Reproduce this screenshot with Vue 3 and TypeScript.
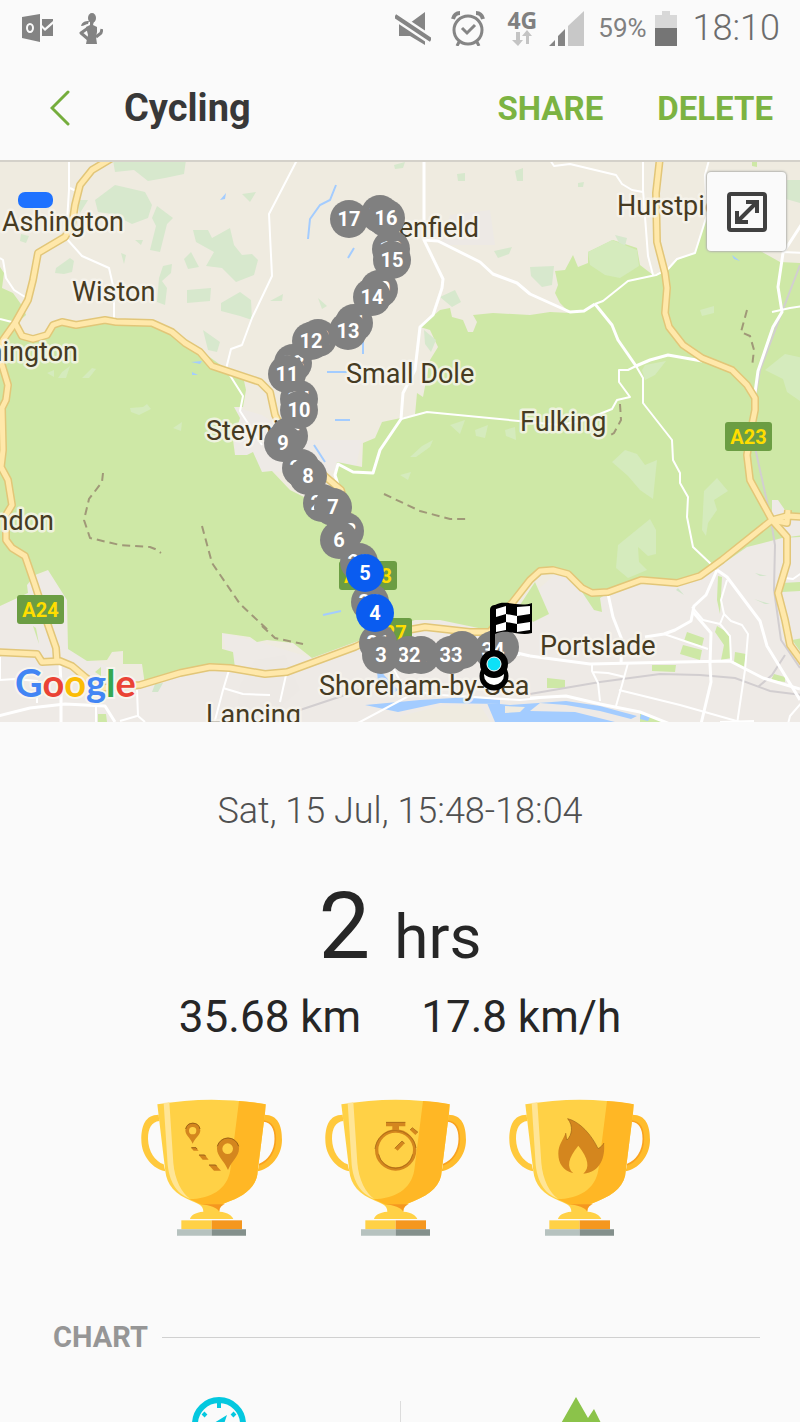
<script setup lang="ts">
interface Place { name: string; x: number; y: number; anchor?: 'start' | 'middle' | 'end' }
interface Marker { label: string; x: number; y: number; active?: boolean }
interface Shield { name: string; x: number; y: number; w: number }

const places: Place[] = [
  { name: 'Ashington', x: 2, y: 231 },
  { name: 'Wiston', x: 72, y: 301 },
  { name: 'Washington', x: 78, y: 361, anchor: 'end' },
  { name: 'Findon', x: 54, y: 530, anchor: 'end' },
  { name: 'Steyni', x: 206, y: 440 },
  { name: 'Henfield', x: 479, y: 237, anchor: 'end' },
  { name: 'Small Dole', x: 346, y: 383 },
  { name: 'Fulking', x: 520, y: 431 },
  { name: 'Hurstpier', x: 617, y: 215 },
  { name: 'Portslade', x: 540, y: 655 },
  { name: 'Shoreham-by-Sea', x: 319, y: 695 },
  { name: 'Lancing', x: 206, y: 724 }
]

const shields: Shield[] = [
  { name: 'A24', x: 17, y: 595, w: 47 },
  { name: 'A23', x: 725, y: 422, w: 47 },
  { name: 'A283', x: 339, y: 561, w: 58 },
  { name: 'A27', x: 365, y: 618, w: 47 }
]

const markers: Marker[] = [
  { label: '1', x: 500, y: 647 },
  { label: '34', x: 493, y: 650 },
  { label: '1', x: 462, y: 650 },
  { label: '33', x: 451, y: 655 },
  { label: '2', x: 421, y: 655 },
  { label: '32', x: 409, y: 655 },
  { label: '31', x: 378, y: 643 },
  { label: '30', x: 370, y: 602 },
  { label: '29', x: 359, y: 562 },
  { label: '28', x: 345, y: 531 },
  { label: '27', x: 322, y: 503 },
  { label: '26', x: 301, y: 468 },
  { label: '25', x: 289, y: 436 },
  { label: '24', x: 299, y: 399 },
  { label: '23', x: 293, y: 363 },
  { label: '22', x: 318, y: 338 },
  { label: '21', x: 354, y: 323 },
  { label: '20', x: 379, y: 289 },
  { label: '19', x: 391, y: 249 },
  { label: '18', x: 380, y: 214 },
  { label: '17', x: 349, y: 219 },
  { label: '16', x: 386, y: 218 },
  { label: '15', x: 392, y: 260 },
  { label: '14', x: 372, y: 297 },
  { label: '13', x: 348, y: 331 },
  { label: '12', x: 311, y: 341 },
  { label: '11', x: 287, y: 374 },
  { label: '10', x: 299, y: 410 },
  { label: '9', x: 283, y: 443 },
  { label: '8', x: 308, y: 476 },
  { label: '7', x: 333, y: 507 },
  { label: '6', x: 339, y: 540 },
  { label: '3', x: 381, y: 655 },
  { label: '5', x: 365, y: 573, active: true },
  { label: '4', x: 375, y: 613, active: true }
]

const mainRoads: string[] = [
  'M112 158L92 170L80 185L75 205L72 225L65 237L38 253L33 280L28 300L15 323L3 340L-3 352L2 365L8 385L6 400L2 408L3 450L1 467L8 480L12 505L6 515L6 540L12 548L25 556L35 585L48 625L56 648L57 663',
  'M15 323L22 336L33 339L47 335L53 325L62 322L76 325L105 320L116 322L152 323L172 332L185 343L200 352L212 366L260 382L270 392L275 415L290 445L327 478L341 490L360 560L376 618L365 640',
  'M-3 652L37 654L42 662L60 661L72 666L85 677L100 688L140 685L180 673L210 667L230 668L265 674L287 672L355 647L380 635L425 627L470 632L490 632L505 612L530 580L540 571L553 570L568 574L582 588L592 593L608 592L641 580L677 583L700 576L722 560L772 520L787 516L803 517',
  'M660 157L656 193L657 242L665 273L667 288L665 313L669 327L683 345L702 358L732 370L747 385L755 398L755 410L751 430L747 455L750 480L772 520L787 537L787 563L778 593L785 620L790 645L803 663',
  'M772 520L787 523L788 510'
]

const wideRoads: string[] = [
  'M424 160V240L443 279L442 288L433 315L420 327L415 370L403 393L401 419L380 450L373 473L353 472L338 464L335 475L339 488',
  'M424 240L438 241L480 262L493 274L517 283L530 294L570 312L584 311L595 304',
  'M595 304L612 325L618 340L636 366L650 360L668 355L702 361',
  'M608 594L613 617L622 640L621 664',
  'M717 570L727 577L760 621L767 646L800 700',
  'M717 570L706 595L694 606L691 621L675 630L664 634L645 637',
  'M693 612L711 633L710 664L711 682L701 724',
  'M530 656L590 664L680 662L730 661L763 678L800 689',
  'M500 649L530 656M60 665L61 683V724',
  'M-2 716L30 708L65 704L105 706L115 722',
  'M530 698L566 696L600 704L640 712L670 724',
  'M803 222L783 253L778 287L782 312L773 327L758 371L754 400'
]

const thinRoads: string[] = [
  'M69 160L69 190L66 238L82 256L109 268L114 290V320',
  'M70 188L78 192M0 258L3 260L6 278L14 290L25 297M0 319L12 322',
  'M302 157L296 162L269 214L272 276L252 318L242 345L231 349L226 369L243 396L240 411L262 445',
  'M550 160L554 166L570 164L616 175L622 184L632 190L643 192M643 160V190L648 256L653 275',
  'M709 160L705 175L707 215L695 253L677 259L668 269L656 275L628 281L603 301L595 304',
  'M401 419L427 412L560 425L585 420L612 409L617 400L630 397L619 382V370L628 370L636 366L643 378V403L672 440L673 460L680 473V483L688 497L687 517L693 547L712 565',
  'M772 312L790 308L803 306M782 252L803 253',
  'M727 580L721 600L724 614L720 624L703 620L692 607M724 614L731 621L742 625L748 634L745 670L737 724',
  'M720 624L730 636L731 660M664 634L708 649M628 663L622 685L616 706M619 690L680 705L740 722',
  'M592 664V671L598 683L600 701M592 672L608 673L625 677M0 657L0 680L15 679L37 681V703M137 690L138 716L145 722M137 716L120 721M96 700V724',
  'M229 670L223 690L214 724M223 688L243 694L270 695M286 675L280 702M420 690L360 722L350 726M420 662L440 650L520 655',
  'M785 578L793 579L803 572M720 722L754 721M803 701L790 716L788 724M393 668L405 690L440 695L520 700L540 698'
]

const trails: string[] = [
  'M103 473L102 482L89 499L84 520L90 538L120 545L150 547L155 549L161 553',
  'M202 526L212 563L240 604L270 632',
  'M262 626L275 638L303 644',
  'M384 494L420 511L450 519L467 519',
  'M620 404L621 420L614 433L607 437',
  'M747 310L741 332L750 336L754 350L752 367'
]

const woods: string[] = [
  'M95 200L115 185L128 188L145 192L152 205L148 218L132 224L112 214L98 212Z',
  'M113 160L186 160L184 174L165 178L148 181L134 170L115 172Z',
  'M157 206L173 218L167 224L160 252L150 250L156 226L152 218Z',
  'M193 230L208 230L212 238L230 228L234 245L242 255L252 254L258 260L254 275L236 282L222 268L206 266L214 252L196 242Z',
  'M56 268L70 258L74 261L72 272L64 274L55 273Z',
  'M184 259L191 252L199 267L188 269Z',
  'M187 290L211 288L210 301L187 303Z',
  'M221 303L240 292L251 300L252 320L240 316L221 311Z',
  'M159 278L163 266L172 264L171 273L162 281L167 288L165 305L157 302Z',
  'M76 200L88 200L80 213ZM21 234L29 236L26 243L20 241Z',
  'M242 194L256 192L250 202ZM203 330L220 342L217 352L208 350Z',
  'M135 240L143 240L141 245ZM121 253L126 255L124 264Z',
  'M394 165L405 162L403 168L395 169ZM457 174L465 173L465 181L458 181Z',
  'M515 171L523 168L523 181L517 181ZM318 298L327 306L322 309ZM270 301L283 294L282 301Z',
  'M440 297L455 290L461 302L452 307ZM530 267L554 266L552 285L542 287L531 276Z',
  'M494 251L512 247L509 254L498 258ZM424 330L436 340L431 352L425 344Z',
  'M578 183L584 182L583 187L578 187Z',
  'M615 235L627 238L625 246L619 243ZM787 180H800V203L786 199Z'
]

const meadows: string[] = [
  'M588 252L612 240L637 250L639 266L620 278L605 275L590 265Z',
  'M612 462L625 450L637 454L645 465L657 460L655 479L653 499L640 490L628 476Z',
  'M704 491L717 478L728 491L714 500L717 510L708 523L706 536L702 530Z',
  'M618 545L650 519L656 530L656 554L648 556L638 547L639 562L647 570L628 578L616 568Z',
  'M765 370L785 354L803 358V403L787 392L783 379Z',
  'M700 310L714 306L714 313L702 316ZM645 365L666 361L655 375L645 380L642 370Z',
  'M130 408L143 407L147 404L151 409L139 415L131 412ZM82 378L92 368L96 369L89 378ZM47 373L54 370L54 377Z',
  'M173 428L182 422L181 431ZM62 372L70 366L66 378L58 378Z',
  'M450 425L465 420L460 434ZM475 430L488 425L485 438L476 436ZM505 430L515 427L516 440L506 436Z',
  'M410 457L422 446L433 440L430 447L416 457ZM400 475L411 472L408 480Z'
]

const trophies = ['distance', 'duration', 'calories'] as const
</script>

<template>
  <div class="screen">
    <div class="status" aria-label="Status bar">
      <div class="status-side">
        <svg class="outlook" viewBox="0 0 32 30" role="img" aria-label="Outlook">
          <path d="M0 4L18 1V29L0 25Z" fill="#838383" />
          <path d="M20 6H31V8L23 15L20 12ZM20 15L23 18L31 11V23H20Z" fill="#838383" />
          <ellipse cx="8" cy="15" rx="3" ry="4" fill="none" stroke="#fafafa" stroke-width="2" />
        </svg>
        <svg class="runner" viewBox="0 0 24 31" role="img" aria-label="Fitness">
          <g fill="#838383">
            <ellipse cx="13" cy="5" rx="4" ry="5" />
            <path d="M2 13C3 9 6 8 10 8L9 11C7 11 5 13 2 13Z" />
            <path d="M11 8H15L14 12L18 14V19L17 24L18 31H7L8 26L9 22L7 14L11 12Z" />
          </g>
          <path d="M9 15L2 20L9 26M17 24L22 20L23 16" fill="none" stroke="#838383" stroke-width="3" stroke-linejoin="round" />
        </svg>
      </div>
      <div class="status-side right">
        <svg class="mute" viewBox="0 0 36 34" role="img" aria-label="Muted">
          <path d="M4 12H15L30 1V34L15 25H4Z" fill="#858585" />
          <path d="M0 5L36 29" stroke="#fafafa" stroke-width="9" />
          <path d="M0 5L36 29" stroke="#858585" stroke-width="4" />
        </svg>
        <svg class="alarm" viewBox="0 0 34 35" role="img" aria-label="Alarm">
          <g fill="none" stroke="#858585">
            <circle cx="17" cy="19" r="14" stroke-width="3" />
            <path d="M11 17L16 22L24 14" stroke-width="3" />
            <path d="M2 8C3 4 6 2 9 2M32 8C31 4 28 2 25 2" stroke-width="4" />
            <path d="M8 31L6 35M26 31L28 35" stroke-width="3" />
          </g>
        </svg>
        <div class="network">
          <span>4G</span>
          <svg viewBox="0 0 20 16" aria-hidden="true">
            <path d="M4 2H8V10H11L6 16L0 10H4ZM14 14V6H10L15 0L20 6H17V14Z" fill="#c4c4c4" />
          </svg>
        </div>
        <svg class="signal" viewBox="0 0 35 35" role="img" aria-label="Signal">
          <path d="M0 35L6 29V35ZM9 35V25L16 18V35Z" fill="#858585" />
          <path d="M19 35V15L35 0V35Z" fill="#c8c8c8" />
        </svg>
        <span class="percent">59%</span>
        <svg class="battery" viewBox="0 0 22 35" role="img" aria-label="Battery">
          <path d="M0 4H7V0H15V4H22V35H0Z" fill="#d8d8d8" />
          <path d="M0 17H22V35H0Z" fill="#757575" />
        </svg>
        <time class="clock">18:10</time>
      </div>
    </div>

    <header class="appbar">
      <button class="back" type="button" aria-label="Back">
        <svg viewBox="0 0 20 36"><path d="M18 2L2 18L18 34" fill="none" stroke="#75ad3c" stroke-width="3" stroke-linecap="round" /></svg>
      </button>
      <h1>Cycling</h1>
      <nav class="actions">
        <button type="button">SHARE</button>
        <button type="button">DELETE</button>
      </nav>
    </header>

    <section class="map" aria-label="Route map">
      <svg class="map-canvas" viewBox="0 160 800 562">
        <rect y="160" width="800" height="562" fill="#efebe0" />
        <path d="M0 606L28 593L27 585L48 570L67 600L68 649L145 683L230 668L222 633L260 642L312 658L440 620L490 632L560 570L592 592L690 580L747 547L782 538L768 503L778 499L786 512H800V724H0Z" fill="#eeeae6" />
        <path d="M234 407L262 415L300 440L362 440L355 470L262 472L247 455H235Z" fill="#eeeae6" />
        <path d="M240 685L255 660L285 655L300 690L260 724H235ZM450 215L490 210L495 245L440 245Z" fill="#ede9e5" />
        <path
          d="M0 267L4 273L2 288L13 293L23 307L26 315L15 325L22 336L33 339L47 335L55 325L76 325L105 320L152 321L172 329L200 350L226 369L243 376L246 390L243 407L234 407L240 418L233 440L235 455H247L253 452L262 472L272 471L290 490L310 500L338 492L334 475L337 462L362 467L363 443L375 438L382 422L415 415L417 393L423 397L430 360L438 347L430 330L420 327L440 310L450 308L452 317L463 320L468 332H473L477 322L473 315L493 313L530 315L550 312L570 313L560 303L555 293L558 285L555 271L565 270L573 255L578 267L588 263L588 252L613 240L637 248L640 265L653 275L670 268L677 260L695 253L703 227L707 215V248H755L780 262L800 263V537L782 538L747 547L717 568L700 578L677 584L641 582L608 593L600 598L602 612L594 610L582 592L568 573L540 571L530 580L488 630L440 620L415 620L312 658L293 643L267 640L257 642L250 637L222 633V649L233 652L235 668L210 667L180 673L145 685L142 664H123V651L112 652L107 660L87 661L68 649L67 600L48 570L35 575L27 585L28 593L0 606Z"
          fill="#cee8a6" />
        <path d="M772 500L778 500L787 513L803 514V535L788 537L772 520Z" fill="#eeeae6" />
        <path v-for="d in woods" :key="d" :d="d" fill="#d7e8cd" />
        <path v-for="d in meadows" :key="d" :d="d" fill="#d5ebbd" />
        <path
          d="M535 582L549 614L533 622L520 605ZM718 576L722 577L720 614L717 600ZM717 626L730 634L731 658L721 660L724 645L715 632ZM687 632L704 638L702 646L684 641ZM652 665L676 665L675 672L652 671ZM683 645L702 650L700 660L680 654ZM547 678L565 680L565 688H547ZM735 652L746 654L744 668L734 662ZM774 674L785 677V682L771 680ZM640 712L665 722H640ZM782 583L800 582V591L782 592ZM792 640L803 638V655ZM36 628L39 644L33 626ZM98 714H106L107 722H98ZM95 672L101 667V676ZM752 160H757L757 167L752 166Z"
          fill="#cee8a6" />
        <path d="M152 692L155 684L163 683L158 692ZM754 599L770 604L765 604ZM755 573L767 576L760 576ZM678 588L684 595L676 590Z" fill="#d2e6cb" />
        <path
          d="M490 703L510 705L566 701L600 706L637 716L631 719L600 711L566 705L540 703L530 711L575 712L615 722H495L487 703ZM376 660L384 675L398 690L392 694L378 682ZM365 705L420 700L470 697L500 700L500 704L440 703L398 712ZM641 714L650 717L648 721L640 719ZM220 200L226 193L225 199ZM191 362L202 361L200 364ZM192 372L198 375L192 375ZM732 255L740 261L734 259Z"
          fill="#a3ccff" />
        <g fill="none" stroke="#a3ccff" stroke-width="2">
          <path d="M336 185L330 200L320 205L310 219L308 239M354 248L348 258M363 340V354M327 372H347M335 420H350M314 445L325 462M323 615L341 611" />
        </g>
        <path d="M505 706L525 707L520 712L505 713ZM400 716L440 706L480 705L492 724H400Z" fill="#efebe0" />
        <g fill="none" stroke="#d2ced0" stroke-width="2">
          <path d="M530 694L600 682L660 674L700 675L735 678L770 691L803 695M800 265L782 312L760 370L750 425L770 515L775 545L774 590L781 640L800 668M785 655L772 675L758 687M300 710L360 690" />
        </g>
        <g fill="none" stroke="#fff" stroke-linejoin="round">
          <path v-for="d in thinRoads" :key="d" :d="d" stroke-width="2" />
          <path v-for="d in wideRoads" :key="d" :d="d" stroke-width="3" />
        </g>
        <g fill="none" stroke="#a09878" stroke-width="2" stroke-dasharray="8 5">
          <path v-for="d in trails" :key="d" :d="d" />
        </g>
        <g fill="none" stroke-linejoin="round">
          <path v-for="d in mainRoads" :key="d" :d="d" stroke="#e2c678" stroke-width="8" />
          <path v-for="d in mainRoads" :key="d" :d="d" stroke="#ffe8aa" stroke-width="5" />
        </g>

        <text v-for="p in places" :key="p.name" class="place" :x="p.x" :y="p.y" :text-anchor="p.anchor ?? 'start'">{{ p.name }}</text>

        <g v-for="s in shields" :key="s.name">
          <rect :x="s.x" :y="s.y" :width="s.w" height="29" rx="3" fill="#6b9d43" />
          <text class="shield" :x="s.x + s.w / 2" :y="s.y + 22">{{ s.name }}</text>
        </g>

        <rect x="18" y="192" width="35" height="16" rx="7" fill="#1f72ff" />

        <g v-for="(m, i) in markers" :key="i">
          <circle :cx="m.x" :cy="m.y" r="19" :fill="m.active ? '#0a5cf0' : '#808080'" />
          <text class="marker" :x="m.x" :y="m.y + 7">{{ m.label }}</text>
        </g>

        <g>
          <circle cx="494" cy="676" r="13" fill="#000" stroke="#000" stroke-width="3" />
          <circle cx="494" cy="675" r="10" fill="#fff" />
          <path d="M490 656V610C490 606 493 605 495 605C506 599 519 608 532 603V633C519 637 508 628 495 634V656Z" fill="#000" />
          <path
            d="M496 609L506 606V614L496 617ZM517 607L530 606V614L517 616ZM506 614L517 616V624L506 622ZM496 626V618L496 625L506 622V630L496 632ZM517 624L530 622V630L517 632Z"
            fill="#fff" />
          <circle cx="494" cy="664" r="14" fill="#000" />
          <circle cx="494" cy="664" r="7" fill="#0de1f7" stroke="#fff" stroke-width="1" />
        </g>

        <text class="brand" x="15" y="697">
          <tspan fill="#4285f4">G</tspan><tspan fill="#ea4335">o</tspan><tspan fill="#fbbc05">o</tspan><tspan fill="#4285f4">g</tspan><tspan fill="#34a853">l</tspan><tspan fill="#ea4335">e</tspan>
        </text>
      </svg>
      <button class="expand" type="button" aria-label="Expand map">
        <svg viewBox="0 0 40 40">
          <rect x="2" y="2" width="36" height="36" rx="2" fill="none" stroke="#404040" stroke-width="4" />
          <path d="M12 28L28 12M19 10H30V21M10 19V30H21" fill="none" stroke="#404040" stroke-width="4" />
        </svg>
      </button>
    </section>

    <main class="summary">
      <p class="when">Sat, 15 Jul, 15:48-18:04</p>
      <p class="duration"><span class="amount">2</span><span class="unit">hrs</span></p>
      <p class="stats"><span>35.68 km</span><span>17.8 km/h</span></p>
      <div class="trophies">
        <svg v-for="t in trophies" :key="t" viewBox="60 55 432 417" role="img" :aria-label="t">
          <path d="M116 105C75 105 64 140 64 180C64 230 100 268 136 275L131 254C105 245 85 215 84 178C84 145 95 127 118 124Z" fill="#ffc93c" />
          <path d="M433 105C475 105 486 140 486 180C486 230 450 268 413 275L417 255C445 245 466 215 466 178C466 145 455 127 431 124Z" fill="#ffbc2c" />
          <path d="M431 124C455 127 466 145 466 178C466 215 445 245 417 255" fill="none" stroke="#f9a21f" stroke-width="5" />
          <path d="M112 74Q275 46 437 74L435 100L413 275C412 315 380 345 330 364C310 371 300 378 298 396C325 398 336 408 340 418H210C213 407 225 398 250 396C250 378 235 372 215 364C165 345 140 315 136 275L115 100Z" fill="#ffd146" />
          <path d="M357 64Q405 67 437 74L435 100L413 275C412 315 380 345 330 364L303 375H245L208 358C270 358 322 330 331 270Z" fill="#ffb725" />
          <path d="M131 70L148 68L160 250C164 300 185 340 210 357C165 340 148 300 143 255Z" fill="#ffe596" />
          <path d="M246 374H314C301 380 298 386 298 396C290 383 270 378 246 374Z" fill="#f5971f" />
          <path d="M184 422H275V449H184Z" fill="#ffd146" />
          <path d="M275 422H366V449H275Z" fill="#f5971f" />
          <path d="M171 449H275V468H171Z" fill="#b6c2bf" />
          <path d="M275 449H378V468H275Z" fill="#84908c" />

          <g v-if="t === 'distance'" fill="#d4861e">
            <path fill-rule="evenodd" d="M218 192C212 176 196 167 196 152A22 22 0 0 1 241 152C241 167 224 176 218 192ZM218 142A11 11 0 1 0 218 164A11 11 0 1 0 218 142Z" />
            <path fill-rule="evenodd" d="M324 271C314 244 291 230 291 207A33 33 0 0 1 357 207C357 230 334 244 324 271ZM323 191A16 16 0 1 0 323 223A16 16 0 1 0 323 191Z" />
            <path d="M213 204H228L236 213H221ZM236 226H254L266 240H248ZM266 256H287L303 273H282Z" />
            <path d="M292 200A33 33 0 0 1 356 200M197 148A22 22 0 0 1 240 148" fill="none" stroke="#9c6216" stroke-width="3" />
            <path d="M214 204H228L231 208M237 226H254L257 230M267 256H287L290 260" fill="none" stroke="#9c6216" stroke-width="3" />
          </g>
          <g v-else-if="t === 'duration'">
            <circle cx="275" cy="211" r="57" fill="none" stroke="#d4861e" stroke-width="10" />
            <path d="M213 208A62 62 0 0 1 336 205M224 224A52 52 0 0 0 326 224" fill="none" stroke="#9c6216" stroke-width="2" />
            <path d="M246 127H304V140H285V152H265V140H246ZM318 151L325 144L342 158L334 166ZM272 206L294 184L302 191L281 213Z" fill="#d4861e" />
            <path d="M246 128H304M318 151L325 144L342 158M272 206L294 184L302 191" fill="none" stroke="#9c6216" stroke-width="2" />
          </g>
          <g v-else>
            <path d="M256 281C225 272 211 251 211 222C211 195 224 184 233 160C235 169 234 175 237 181C252 166 257 139 239 117C275 126 310 164 330 207C338 203 344 197 348 190C352 232 338 277 286 282C306 264 302 237 271 198C240 235 235 262 256 281Z" fill="#d4861e" />
            <path d="M233 160C235 169 234 175 237 181C252 166 257 139 239 117C275 126 310 164 330 207C338 203 344 197 348 190" fill="none" stroke="#9c6216" stroke-width="2" />
          </g>
        </svg>
      </div>
    </main>

    <section class="chart">
      <div class="chart-head"><h2>CHART</h2><hr /></div>
      <div class="tabs">
        <button type="button" aria-label="Speed">
          <svg class="gauge" viewBox="0 0 54 54">
            <circle cx="27" cy="27" r="24" fill="none" stroke="#04c8df" stroke-width="6" />
            <path d="M27 5V11M11 16L14 19M43 16L40 19" stroke="#04c8df" stroke-width="4" />
            <path d="M35 18L31 30L24 34L22 26Z" fill="#04c8df" />
          </svg>
        </button>
        <button type="button" aria-label="Elevation">
          <svg class="peaks" viewBox="0 0 54 54"><path d="M17 0L29 21L35 12L54 50H0V30Z" fill="#8bc34a" /></svg>
        </button>
      </div>
    </section>
  </div>
</template>

<style>
body {
  margin: 0;
  background: #fafafa;
}
</style>

<style scoped>
.screen {
  max-height: 100vh;
  overflow: hidden;
  background: #fafafa;
  color: #262626;
  font-family: Roboto, "Noto Sans", sans-serif;
}
button {
  margin: 0;
  padding: 0;
  border: 0;
  background: none;
  font: inherit;
  color: inherit;
}
svg {
  display: block;
}
h1, h2, p {
  margin: 0;
}
.status {
  display: flex;
  justify-content: space-between;
  align-items: center;
  height: 56px;
  padding: 0 20px 0 22px;
  color: #808080;
}
.status-side {
  display: flex;
  align-items: center;
  gap: 25px;
}
.right {
  gap: 8px;
}
.outlook {
  width: 32px;
  height: 30px;
}
.runner {
  width: 24px;
  height: 31px;
}
.mute {
  width: 36px;
  height: 34px;
  margin-right: 12px;
}
.alarm {
  width: 34px;
  height: 35px;
  margin-right: 14px;
}
.network {
  display: flex;
  flex-direction: column;
  align-items: center;
  font: 700 23px/20px "Open Sans", sans-serif;
  margin-right: 4px;
}
.network svg {
  width: 20px;
  height: 16px;
}
.signal {
  width: 35px;
  height: 35px;
  margin-right: 6px;
}
.percent {
  font-size: 26px;
}
.battery {
  width: 22px;
  height: 35px;
}
.clock {
  margin-left: 8px;
  font-size: 36px;
  font-weight: 300;
  color: #6c6c6c;
}
.appbar {
  display: flex;
  align-items: center;
  height: 104px;
  padding: 0 27px 0 50px;
}
.back svg {
  width: 20px;
  height: 36px;
}
.appbar h1 {
  margin-left: 54px;
  font-size: 38px;
  line-height: 48px;
  font-weight: 700;
  color: #383838;
}
.actions {
  display: flex;
  gap: 54px;
  margin-left: auto;
  font-size: 33px;
  font-weight: 700;
  color: #7cb342;
}
.map {
  position: relative;
}
.map::before {
  content: "";
  position: absolute;
  inset: 0 0 auto;
  height: 2px;
  background: #d4d1ca;
}
.map-canvas {
  width: 100%;
  height: auto;
}
.place {
  font-size: 27px;
  fill: #463b22;
  stroke: #f7f5ee;
  stroke-opacity: 0.8;
  stroke-width: 5px;
  stroke-linejoin: round;
  paint-order: stroke;
}
.shield {
  font-size: 20px;
  font-weight: 700;
  fill: #fd0;
  text-anchor: middle;
}
.marker {
  font-size: 20px;
  font-weight: 700;
  fill: #fff;
  text-anchor: middle;
}
.brand {
  font-family: Lato, sans-serif;
  font-size: 38px;
  font-weight: 700;
  stroke: #f7f5ee;
  stroke-width: 4px;
  paint-order: stroke;
}
.expand {
  position: absolute;
  top: 12px;
  right: 14px;
  display: grid;
  place-items: center;
  width: 79px;
  height: 79px;
  border-radius: 4px;
  background: #fafafa;
  box-shadow: 0 0 2px 1px #b4b4b0;
}
.expand svg {
  width: 40px;
  height: 40px;
}
.summary {
  display: flex;
  flex-direction: column;
  align-items: center;
  padding-top: 65px;
}
.when {
  font-size: 36px;
  line-height: 48px;
  font-weight: 300;
  color: #505050;
}
.duration {
  display: flex;
  align-items: baseline;
  gap: 24px;
  margin-top: 36px;
  line-height: 112px;
}
.amount {
  font-size: 92px;
}
.unit {
  font-size: 62px;
}
.stats {
  display: flex;
  gap: 60px;
  font-size: 44px;
  line-height: 48px;
}
.trophies {
  display: flex;
  gap: 40px;
  margin-top: 57px;
  padding-right: 8px;
}
.trophies svg {
  width: 144px;
  height: 139px;
}
.chart {
  padding-top: 80px;
}
.chart-head {
  display: flex;
  align-items: center;
  gap: 14px;
  padding: 0 40px 0 53px;
}
.chart-head h2 {
  font-size: 29px;
  line-height: 40px;
  color: #969696;
}
.chart-head hr {
  flex: 1;
  margin: 0;
  border: 0;
  border-top: 1px solid #d0d0d0;
}
.tabs {
  display: grid;
  grid-template-columns: 1fr 1fr;
  margin-top: 40px;
}
.tabs button {
  display: flex;
  justify-content: center;
}
.tabs button + button {
  background: linear-gradient(#dcdcdc, #dcdcdc) 0 4px / 1px 100% no-repeat;
}
.gauge,
.peaks {
  width: 54px;
  height: 54px;
}
.gauge {
  margin-left: 38px;
}
.peaks {
  margin-right: 28px;
}
</style>
